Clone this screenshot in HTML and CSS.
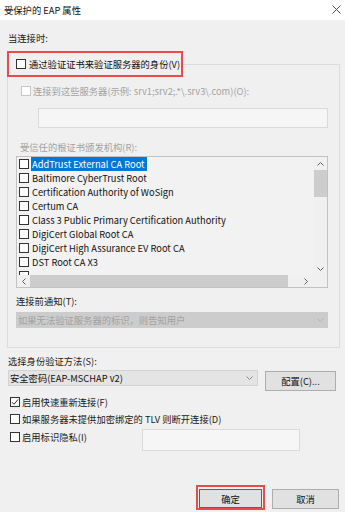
FILE: index.html
```html
<!DOCTYPE html>
<html lang="zh-CN">
<head>
  <meta charset="UTF-8" />
  <title>受保护的 EAP 属性</title>
  <link rel="stylesheet" href="styles.css">
</head>
<body>

  <div class="titlebar">
    <span class="title">受保护的 EAP 属性</span>
    <svg class="close" width="9" height="9" viewBox="0 0 9 9"><path d="M0.5 0.5L8.5 8.5M8.5 0.5L0.5 8.5" stroke="#4a4a4a" stroke-width="1" fill="none"/></svg>
  </div>

  <div class="content">
    <div class="label">当连接时:</div>

    <fieldset class="group">
      <legend class="legend-mark"><span class="cb"></span>通过验证证书来验证服务器的身份(V)</legend>

      <div class="check-row server-row disabled"><span class="cb"></span>连接到这些服务器(示例: srv1;srv2;.*\.srv3\.com)(O):</div>
      <div class="textbox server-box"></div>

      <div class="label ca-label disabled">受信任的根证书颁发机构(R):</div>
      <div class="cert-list">
        <div class="rows">
          <div class="row"><span class="cb"></span><span class="name selected">AddTrust External CA Root</span></div>
          <div class="row"><span class="cb"></span><span class="name">Baltimore CyberTrust Root</span></div>
          <div class="row"><span class="cb"></span><span class="name">Certification Authority of WoSign</span></div>
          <div class="row"><span class="cb"></span><span class="name">Certum CA</span></div>
          <div class="row"><span class="cb"></span><span class="name">Class 3 Public Primary Certification Authority</span></div>
          <div class="row"><span class="cb"></span><span class="name">DigiCert Global Root CA</span></div>
          <div class="row"><span class="cb"></span><span class="name">DigiCert High Assurance EV Root CA</span></div>
          <div class="row"><span class="cb"></span><span class="name">DST Root CA X3</span></div>
          <div class="row"><span class="cb"></span></div>
        </div>
        <div class="vscroll">
          <div class="arrow"><svg width="7" height="4" viewBox="0 0 7 4"><path d="M0.5 3.5L3.5 0.5L6.5 3.5" stroke="#606060" fill="none"/></svg></div>
          <div class="thumb"></div>
          <div class="spacer"></div>
          <div class="arrow"><svg width="7" height="4" viewBox="0 0 7 4"><path d="M0.5 0.5L3.5 3.5L6.5 0.5" stroke="#606060" fill="none"/></svg></div>
        </div>
        <div class="hscroll">
          <div class="arrow left"><svg width="4" height="7" viewBox="0 0 4 7"><path d="M3.5 0.5L0.5 3.5L3.5 6.5" stroke="#606060" fill="none"/></svg></div>
          <div class="thumb"></div>
          <div class="spacer"></div>
          <div class="arrow right"><svg width="4" height="7" viewBox="0 0 4 7"><path d="M0.5 0.5L3.5 3.5L0.5 6.5" stroke="#606060" fill="none"/></svg></div>
        </div>
        <div class="corner"></div>
      </div>

      <div class="label notify-label">连接前通知(T):</div>
      <div class="dropdown disabled">
        <span>如果无法验证服务器的标识，则告知用户</span>
        <svg width="7" height="4" viewBox="0 0 7 4"><path d="M0.5 0.5L3.5 3.5L6.5 0.5" stroke="#b4b4b4" fill="none"/></svg>
      </div>
    </fieldset>

    <div class="label method-label">选择身份验证方法(S):</div>
    <div class="method-row">
      <div class="select">
        <span>安全密码(EAP-MSCHAP v2)</span>
        <svg width="7" height="4" viewBox="0 0 7 4"><path d="M0.5 0.5L3.5 3.5L6.5 0.5" stroke="#8a8a8a" fill="none"/></svg>
      </div>
      <div class="btn config-btn">配置(C)...</div>
    </div>

    <div class="check-row opt first"><span class="cb checked"><svg width="8" height="8" viewBox="0 0 8 8"><path d="M1 4.2L3 6.3L7 1.5" stroke="#333" stroke-width="1" fill="none"/></svg></span>启用快速重新连接(F)</div>
    <div class="check-row opt">
      <span class="cb"></span>如果服务器未提供加密绑定的 TLV 则断开连接(D)
    </div>
    <div class="privacy-row">
      <div class="check-row opt-label"><span class="cb"></span>启用标识隐私(I)</div>
      <div class="textbox privacy-box"></div>
    </div>

    <div class="actions">
      <div class="ok-mark"><div class="btn default">确定</div></div>
      <div class="btn cancel">取消</div>
    </div>
  </div>

</body>
</html>
```

FILE: styles.css
```css
* {
  margin: 0; padding: 0; box-sizing: border-box;
}
html, body {
  width: 345px; height: 512px;
  overflow: hidden;
}
body {
  background: #f0f0f0;
  font-family: "Noto Sans CJK SC", "Noto Sans", sans-serif;
  font-size: 9.3px;
  line-height: 14px;
  color: #1a1a1a;
}

/* title bar */
.titlebar {
  height: 20px; background: #fff;
  display: flex; align-items: center; justify-content: space-between;
  padding: 0 4px 0 4px;
  color: #111;
}
.close { margin-top: -2px; }

.content { padding: 11px 5px 0 8px; }

.label { height: 14px; }
.disabled { color: #a2a2a2; }

/* checkboxes */
.cb {
  width: 10px; height: 10px; flex: 0 0 10px;
  border: 1px solid #333; background: #fff;
  display: flex; align-items: center; justify-content: center;
}
.disabled .cb { border-color: #c6c6c6; }

.check-row {
  display: flex; align-items: center; gap: 2px;
  height: 14px;
}

/* group box */
.group {
  margin: 6px 0 0 -1px;
  border: 1px solid #dcdcdc;
  padding: 0 11px 19px 8px;
  min-width: 0;
}
.legend-mark {
  margin-left: -9px;
  height: 26px;
  display: flex; align-items: center; gap: 3px;
  border: 2px solid #e94b4b;
  padding: 0 1px 0 7px;
  color: #111;
}

.server-row { margin-top: 7px; padding-left: 5px; }

.textbox {
  border: 1px solid #dadada;
  background: #f6f6f6;
}
.server-box { margin: 10px 0 0 22px; height: 20px; }

.ca-label { margin-top: 12px; padding-left: 4px; }

/* certificate list */
.cert-list {
  margin-top: 2px;
  height: 132px;
  border: 1px solid #c2c2c2;
  background: #f2f2f2;
  display: grid;
  grid-template-columns: minmax(0, 1fr) 14px;
  grid-template-rows: minmax(0, 1fr) 12px;
}
.rows { overflow: hidden; min-height: 0; }
.row {
  height: 14px;
  display: flex; align-items: center;
  padding-left: 2px;
  color: #111;
}
.row .cb { margin-right: 2px; }
.name { padding: 0 2px 0 1px; white-space: nowrap; }
.name.selected { background: #0078d7; color: #fff; }

.vscroll {
  display: flex; flex-direction: column;
  background: #f0f0f0;
}
.vscroll .arrow {
  height: 13px;
  display: flex; align-items: center; justify-content: center;
}
.vscroll .thumb { height: 27px; margin-left: 1px; background: #cdcdcd; }
.spacer { flex: 1; }

.hscroll {
  display: flex;
  background: #f0f0f0;
}
.hscroll .arrow {
  width: 13px;
  display: flex; align-items: center; justify-content: center;
}
.hscroll .arrow.right { width: 14px; }
.hscroll .thumb { width: 258px; background: #cdcdcd; }
.corner { background: #f0f0f0; }

.notify-label { margin-top: 6px; }

.dropdown {
  margin-top: 4px; height: 16px;
  background: #cccccc;
  display: flex; align-items: center; justify-content: space-between;
  padding: 0 4px 0 2px;
}

/* method */
.method-label { margin-top: 6px; }
.method-row {
  display: flex; align-items: flex-start;
  margin-top: 2px;
}
.select {
  width: 250px; height: 16px;
  background: #e4e4e4;
  border: 1px solid #d2d2d2;
  display: flex; align-items: center; justify-content: space-between;
  padding: 0 4px 0 1px;
  color: #111;
}

.btn {
  background: #e1e1e1;
  border: 1px solid #adadad;
  display: flex; align-items: center; justify-content: center;
  color: #111;
}
.config-btn { margin: 1px 0 0 7px; width: 71px; height: 20px; }

.opt { padding-left: 2px; margin-top: 3px; }
.opt.first { margin-top: 4px; }

.privacy-row {
  display: flex; align-items: flex-start;
  margin-top: 4px;
}
.opt-label { flex: 0 0 134px; padding-left: 2px; }
.privacy-box { margin-top: -1px; width: 158px; height: 22px; }

/* dialog buttons */
.actions {
  margin-top: 34px;
  display: flex; justify-content: flex-end; align-items: flex-start;
  padding-right: 1px;
}
.ok-mark {
  border: 2px solid #e94b4b;
  padding: 2px 1px 0;
}
.btn.default {
  width: 63px; height: 19px;
  border-color: #0078d7;
}
.cancel { margin: 4px 0 0 7px; width: 67px; height: 20px; }
```
